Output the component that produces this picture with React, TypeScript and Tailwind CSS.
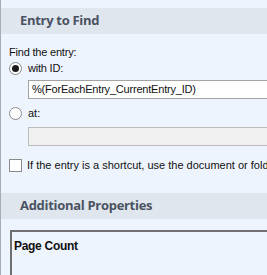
import React from "react";

const SectionHeader = ({ title }: { title: string }) => (
  <div className="h-[26px] bg-[#dfe6ee] flex items-center pl-[19px]">
    <span className="font-['Open_Sans',sans-serif] font-bold text-[13px] tracking-[-0.3px] text-[#4b5261]">{title}</span>
  </div>
);

const Radio = ({ checked }: { checked?: boolean }) => (
  <span className="w-[13px] h-[13px] rounded-full border border-[#8a8a8a] bg-white flex items-center justify-center shrink-0">
    {checked && <span className="w-[7px] h-[7px] rounded-full bg-[#1a1a1a]" />}
  </span>
);

const App = () => {
  return (
    <div className="w-[267px] h-[275px] overflow-hidden bg-[#eef4fd] border-l border-[#a7adb4] font-['Liberation_Sans',sans-serif] text-[11px] text-[#111]">
      <div className="h-[8px]" />
      <SectionHeader title="Entry to Find" />

      <div className="pl-[8px] pt-[12px]">
        <div className="leading-[13px] tracking-[-0.2px]">Find the entry:</div>
        <div className="flex items-center gap-[6px] mt-[3px] h-[13px]">
          <Radio checked />
          <span className="tracking-[-0.2px]">with ID:</span>
        </div>
        <div className="ml-[19px] mt-[5px] h-[19px] bg-white border-t border-l border-b border-[#a3a3a3] flex items-center pl-[3px] whitespace-nowrap overflow-hidden tracking-[-0.2px]">
          %(ForEachEntry_CurrentEntry_ID)
        </div>
        <div className="flex items-center gap-[6px] mt-[8px] h-[13px]">
          <Radio />
          <span>at:</span>
        </div>
        <div className="ml-[19px] mt-[7px] h-[19px] bg-[#f0f0f0] border-t border-l border-b border-[#bcbcbc]" />
        <div className="flex items-center gap-[5px] mt-[13px] h-[13px] whitespace-nowrap">
          <span className="w-[13px] h-[13px] border border-[#8a8a8a] bg-white shrink-0" />
          <span>If the entry is a shortcut, use the document or folder it points to</span>
        </div>
      </div>

      <div className="h-[21px]" />
      <SectionHeader title="Additional Properties" />

      <div className="pl-[9px] pt-[11px]">
        <div className="h-[60px] bg-[#eef4fd] border-t-2 border-l-2 border-[#6f6f6f] pl-[2px] pt-[5px]">
          <span className="font-bold text-[12px] tracking-[-0.3px]">Page Count</span>
        </div>
      </div>
    </div>
  );
};

export default App;
